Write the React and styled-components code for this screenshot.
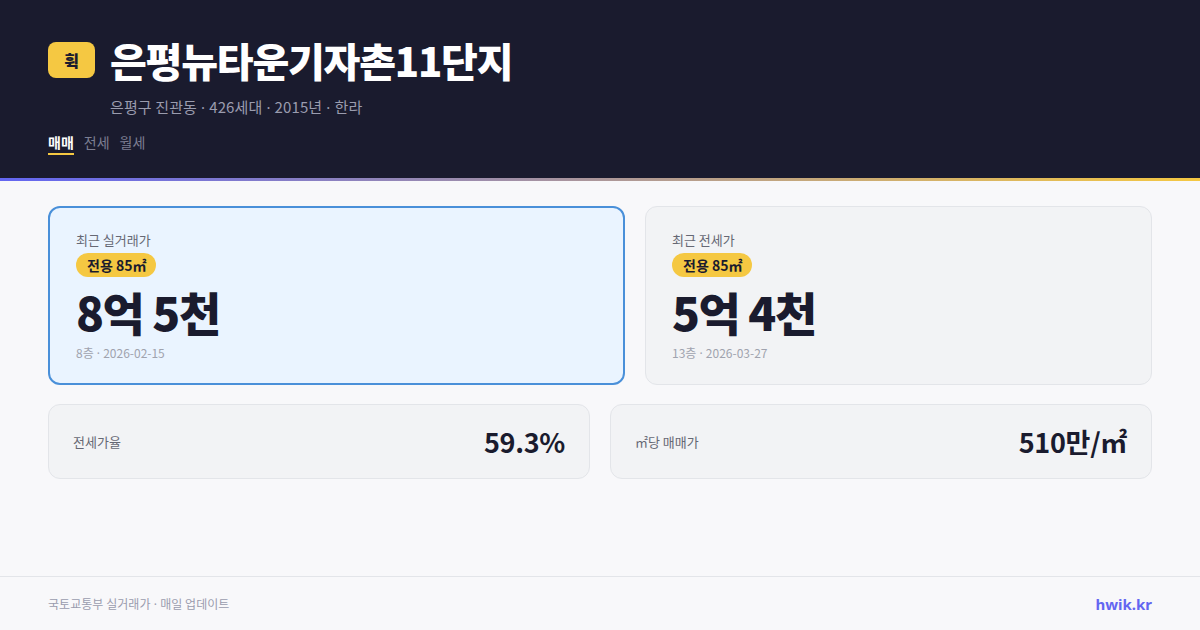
import React from "react";
import styled, { createGlobalStyle } from "styled-components";

const GlobalStyle = createGlobalStyle`
  html, body {
    margin: 0;
    padding: 0;
    background: #f8f8fa;
  }
  body {
    font-family: "Noto Sans CJK KR", "Noto Sans", sans-serif;
  }
`;

const Page = styled.div`
  width: 1200px;
  height: 630px;
  display: flex;
  flex-direction: column;
  background: #f8f8fa;
  overflow: hidden;
`;

const Header = styled.header`
  background: #1a1b2e;
  padding: 36px 48px 0;
  border-bottom: 3px solid transparent;
  border-image: linear-gradient(90deg, #6366f1, #f5c842) 1;
  box-sizing: content-box;
  height: 142px;
`;

const TitleRow = styled.div`
  display: flex;
  align-items: center;
  gap: 15px;
`;

const Logo = styled.div`
  width: 47px;
  height: 36px;
  border-radius: 8px;
  background: #f5c842;
  color: #1a1b2e;
  font-size: 16px;
  font-weight: 900;
  display: flex;
  align-items: center;
  justify-content: center;
`;

const Title = styled.h1`
  margin: 0;
  color: #ffffff;
  font-size: 40px;
  font-weight: 900;
  letter-spacing: -1.2px;
  line-height: 48px;
`;

const Sub = styled.div`
  margin: 12px 0 0 62px;
  color: #9a9cae;
  font-size: 15px;
  line-height: 22px;
  letter-spacing: 0.12px;
`;

const Dot = styled.span`
  font-family: "Noto Sans", sans-serif;
`;

const Tabs = styled.div`
  display: flex;
  gap: 10px;
  margin-top: 14px;
`;

const Tab = styled.span`
  font-size: 14px;
  line-height: 20px;
  padding-bottom: 1px;
  font-weight: ${(p) => (p.$active ? 700 : 400)};
  color: ${(p) => (p.$active ? "#ffffff" : "#7c7e92")};
  border-bottom: 2px solid ${(p) => (p.$active ? "#f5c842" : "transparent")};
`;

const Main = styled.main`
  flex: 1;
  padding: 25px 48px 0;
  display: flex;
  flex-direction: column;
  gap: 19px;
`;

const TopGrid = styled.div`
  display: grid;
  grid-template-columns: 577fr 507fr;
  gap: 20px;
`;

const PriceCard = styled.div`
  height: 179px;
  box-sizing: border-box;
  border-radius: 12px;
  background: ${(p) => (p.$highlight ? "#eaf4ff" : "#f2f3f5")};
  border: ${(p) => (p.$highlight ? "2px solid #4a90d9" : "1px solid #e3e5e9")};
  padding: ${(p) => (p.$highlight ? "23px 26px" : "24px 26px")};
`;

const Label = styled.div`
  color: #666874;
  font-size: 13px;
  line-height: 18px;
`;

const Badge = styled.span`
  display: inline-block;
  margin-top: 4px;
  padding: 0 10px 0 11px;
  height: 24px;
  line-height: 24px;
  border-radius: 12px;
  background: #f5c842;
  color: #1a1b2e;
  font-size: 14px;
  font-weight: 700;
`;

const Price = styled.div`
  margin-top: 4px;
  color: #1a1b2e;
  font-size: 46px;
  font-weight: 900;
  letter-spacing: -1.5px;
  line-height: 60px;
`;

const Meta = styled.div`
  margin-top: 3px;
  color: #a0a3ae;
  font-size: 12px;
  line-height: 18px;
`;

const BottomGrid = styled.div`
  display: grid;
  grid-template-columns: 1fr 1fr;
  gap: 20px;
`;

const StatCard = styled.div`
  height: 75px;
  box-sizing: border-box;
  border-radius: 12px;
  background: #f2f3f5;
  border: 1px solid #e3e5e9;
  padding: 0 24px;
  display: flex;
  align-items: center;
  justify-content: space-between;
`;

const StatValue = styled.span`
  color: #1a1b2e;
  font-size: 27px;
  font-weight: 700;
  letter-spacing: -0.3px;
`;

const Footer = styled.footer`
  height: 53px;
  border-top: 1px solid #e3e5e9;
  padding: 0 48px;
  display: flex;
  align-items: center;
  justify-content: space-between;
`;

const Source = styled.span`
  color: #9a9cae;
  font-size: 12px;
  letter-spacing: 0.05px;
`;

const Brand = styled.span`
  color: #6366f1;
  font-size: 15px;
  font-weight: 700;
  font-family: "Noto Sans", sans-serif;
`;

const prices = [
  { label: "최근 실거래가", value: "8억 5천", floor: "8층", date: "2026-02-15", highlight: true },
  { label: "최근 전세가", value: "5억 4천", floor: "13층", date: "2026-03-27" },
];

const stats = [
  { label: "전세가율", value: "59.3%" },
  { label: "㎡당 매매가", value: "510만/㎡" },
];

const joinDots = (parts) =>
  parts.map((part, i) => (
    <React.Fragment key={i}>
      {i > 0 && <Dot> · </Dot>}
      {part}
    </React.Fragment>
  ));

export default function App() {
  return (
    <Page>
      <GlobalStyle />
      <Header>
        <TitleRow>
          <Logo>휙</Logo>
          <Title>은평뉴타운기자촌11단지</Title>
        </TitleRow>
        <Sub>{joinDots(["은평구 진관동", "426세대", "2015년", "한라"])}</Sub>
        <Tabs>
          <Tab $active>매매</Tab>
          <Tab>전세</Tab>
          <Tab>월세</Tab>
        </Tabs>
      </Header>
      <Main>
        <TopGrid>
          {prices.map((p) => (
            <PriceCard key={p.label} $highlight={p.highlight}>
              <Label>{p.label}</Label>
              <Badge>전용 85㎡</Badge>
              <Price>{p.value}</Price>
              <Meta>{joinDots([p.floor, p.date])}</Meta>
            </PriceCard>
          ))}
        </TopGrid>
        <BottomGrid>
          {stats.map((s) => (
            <StatCard key={s.label}>
              <Label>{s.label}</Label>
              <StatValue>{s.value}</StatValue>
            </StatCard>
          ))}
        </BottomGrid>
      </Main>
      <Footer>
        <Source>{joinDots(["국토교통부 실거래가", "매일 업데이트"])}</Source>
        <Brand>hwik.kr</Brand>
      </Footer>
    </Page>
  );
}
